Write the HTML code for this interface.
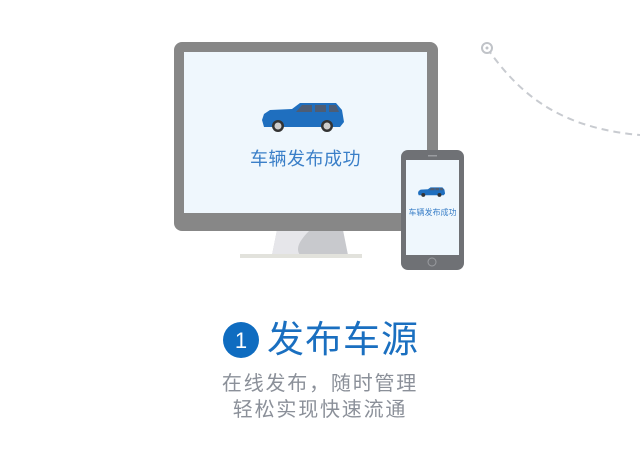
<!DOCTYPE html>
<html><head><meta charset="utf-8"><style>
body{margin:0;width:640px;height:472px;background:#fff;position:relative;overflow:hidden;font-family:"Liberation Sans","Noto Sans CJK SC",sans-serif}
.a{position:absolute}
</style></head><body>
<svg class="a" style="left:0;top:0" width="640" height="472">
<path d="M487 48 C520 95 560 128 640 135" fill="none" stroke="#c8cbd0" stroke-width="2" stroke-dasharray="7 5"/>
<circle cx="487" cy="48" r="5" fill="#fff" stroke="#c0c3c8" stroke-width="2"/>
<circle cx="487" cy="48" r="1.5" fill="#c0c3c8"/>
<path d="M277 230 L343 230 L348 255 L272 255 Z" fill="#c8c9cd"/>
<path d="M277 230 L310 230 C300 240 295 248 300 255 L272 255 Z" fill="#e6e6ea"/>
<rect x="240" y="254" width="122" height="4" fill="#e2e2dc"/>
<rect x="174" y="42" width="264" height="189" rx="8" fill="#878787"/>
<rect x="184" y="52" width="243" height="161" fill="#eff7fd"/>
<g transform="translate(262,102)">
<path d="M2 12 L8 8 L30 7 L38 1 L74 1 L80 8 L82 20 L78 25 L2 25 L0 18 Z" fill="#1f6fbf"/>
<path d="M40 3 L50 3 L50 10 L34 10 Z M53 3 L64 3 L64 10 L53 10 Z M67 3 L74 3 L77 10 L67 10 Z" fill="#4d5d75"/>
<circle cx="16" cy="24" r="6" fill="#333"/><circle cx="16" cy="24" r="3.5" fill="#ccc"/>
<circle cx="65" cy="24" r="6" fill="#333"/><circle cx="65" cy="24" r="3.5" fill="#ccc"/>
</g>
<rect x="401" y="150" width="63" height="120" rx="7" fill="#6f7175"/>
<rect x="406" y="160" width="53" height="95" fill="#eff7fd"/>
<circle cx="432" cy="262" r="4" fill="none" stroke="#9a9ca0" stroke-width="1"/>
<rect x="428" y="155" width="9" height="1.5" fill="#9a9ca0"/>
<g transform="translate(418,187) scale(0.33)">
<path d="M2 12 L8 8 L30 7 L38 1 L74 1 L80 8 L82 20 L78 25 L2 25 L0 18 Z" fill="#1f6fbf"/>
<path d="M40 3 L50 3 L50 10 L34 10 Z M53 3 L64 3 L64 10 L53 10 Z M67 3 L74 3 L77 10 L67 10 Z" fill="#4d5d75"/>
<circle cx="16" cy="24" r="6" fill="#333"/><circle cx="65" cy="24" r="6" fill="#333"/>
</g>
<circle cx="241" cy="340" r="18" fill="#0f6cc0"/>
<text x="241" y="348" font-size="22" fill="#fff" text-anchor="middle" font-family="Liberation Sans">1</text>
</svg>
<div class="a" style="left:184px;top:145px;width:243px;text-align:center;font-size:18px;color:#3a7fc8;letter-spacing:0.5px">车辆发布成功</div>
<div class="a" style="left:404px;top:207px;width:57px;text-align:center;font-size:8px;color:#3a7fc8;white-space:nowrap">车辆发布成功</div>
<div class="a" style="left:267px;top:316px;font-size:37px;color:#1a6fc0;line-height:48px;letter-spacing:1px">发布车源</div>
<div class="a" style="left:0;top:371px;width:640px;text-align:center;font-size:20px;color:#8b9099;line-height:26px;letter-spacing:1.8px">在线发布，随时管理<br>轻松实现快速流通</div>
</body></html>
